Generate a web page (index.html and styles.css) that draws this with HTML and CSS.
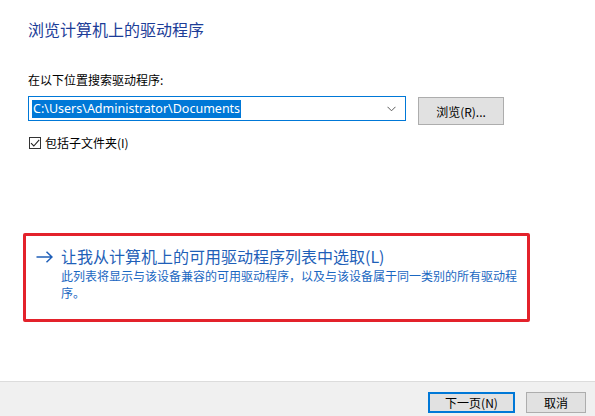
FILE: index.html
```html
<!DOCTYPE html>
<html lang="zh-CN">
<head>
<meta charset="utf-8">
<title>浏览计算机上的驱动程序</title>
<link rel="stylesheet" href="styles.css">
</head>
<body>
<div class="page">
  <main class="content">
    <h1 class="title">浏览计算机上的驱动程序</h1>
    <div class="label">在以下位置搜索驱动程序:</div>
    <div class="path-row">
      <div class="combo">
        <span class="combo-text">C:\Users\Administrator\Documents</span>
        <svg class="chevron" width="9" height="6" viewBox="0 0 9 6"><path d="M0.5 0.8 L4.5 4.8 L8.5 0.8" fill="none" stroke="#5a5a5a" stroke-width="1"/></svg>
      </div>
      <button class="btn btn-browse" type="button">浏览(R)...</button>
    </div>
    <label class="check-row">
      <span class="checkbox">
        <svg width="10" height="10" viewBox="0 0 10 10"><path d="M1 5.2 L3.8 8 L9.2 1.8" fill="none" stroke="#222" stroke-width="1.1"/></svg>
      </span>
      <span class="check-text">包括子文件夹(I)</span>
    </label>
    <div class="pick-box">
      <div class="pick-link">
        <svg class="arrow" width="17" height="12" viewBox="0 0 17 12"><path d="M0.5 6 H16 M10.5 0.8 L16 6 L10.5 11.2" fill="none" stroke="#1f5fb8" stroke-width="1.5"/></svg>
        <div class="pick-body">
          <div class="pick-title">让我从计算机上的可用驱动程序列表中选取(L)</div>
          <div class="pick-desc">此列表将显示与该设备兼容的可用驱动程序，以及与该设备属于同一类别的所有驱动程序。</div>
        </div>
      </div>
    </div>
  </main>
  <footer class="footer">
    <button class="btn btn-default" type="button">下一页(N)</button>
    <button class="btn btn-cancel" type="button">取消</button>
  </footer>
</div>
</body>
</html>
```

FILE: styles.css
```css
* { box-sizing: border-box; }

html, body {
  margin: 0;
  padding: 0;
  background: #ffffff;
}

body {
  width: 595px;
  height: 416px;
  overflow: hidden;
  font-family: "Noto Sans CJK SC", "Noto Sans", sans-serif;
  color: #000;
}

.page {
  display: flex;
  flex-direction: column;
  height: 416px;
}

.content {
  flex: 1;
  padding: 18px 0 0 28px;
}

.title {
  margin: 0;
  font-size: 16px;
  font-weight: normal;
  line-height: 22px;
  color: #1c3d98;
}

.label {
  margin-top: 32px;
  font-size: 12px;
  line-height: 16px;
}

.path-row {
  display: flex;
  align-items: flex-start;
  margin-top: 8px;
}

.combo {
  width: 378px;
  height: 25px;
  border: 1px solid #0078d7;
  display: flex;
  align-items: center;
  padding: 0 9px 0 3px;
  justify-content: space-between;
}

.combo-text {
  background: #0078d7;
  color: #fff;
  font-family: "Noto Sans", "Noto Sans CJK SC", sans-serif;
  font-size: 12.5px;
  line-height: 18px;
  padding: 0 1px;
}

.chevron { display: block; }

.btn {
  font-family: "Noto Sans CJK SC", sans-serif;
  font-size: 12px;
  color: #000;
  background: #e1e1e1;
  border: 1px solid #adadad;
  padding: 0;
  margin: 0;
}

.btn-browse {
  margin-left: 12px;
  margin-top: 1px;
  width: 86px;
  height: 28px;
}

.check-row {
  display: flex;
  align-items: center;
  margin-top: 10px;
  gap: 4px;
  font-size: 12px;
  line-height: 16px;
}

.checkbox {
  width: 12px;
  height: 12px;
  border: 1px solid #333;
  display: flex;
  align-items: center;
  justify-content: center;
  margin-left: 1px;
}

.checkbox svg { display: block; }

.pick-box {
  margin: 82px 0 0 -5px;
  width: 507px;
  height: 89px;
  border: 3px solid #e3222b;
  border-radius: 2px;
  padding: 9px 0 0 10px;
}

.pick-link {
  display: flex;
  align-items: flex-start;
}

.arrow {
  display: block;
  margin-top: 6px;
  flex: none;
}

.pick-body {
  margin-left: 8px;
}

.pick-title {
  font-size: 16px;
  line-height: 22px;
  color: #1f5fb8;
}

.pick-desc {
  width: 462px;
  font-size: 12px;
  line-height: 17px;
  color: #1a67c2;
}

.footer {
  height: 35px;
  flex: none;
  background: #f0f0f0;
  border-top: 1px solid #dcdcdc;
  display: flex;
  justify-content: flex-end;
  align-items: flex-start;
  padding: 10px 9px 0 0;
  gap: 11px;
}

.btn-default {
  width: 87px;
  height: 21px;
  border: 2px solid #0078d7;
}

.btn-cancel {
  width: 60px;
  height: 21px;
}
```
